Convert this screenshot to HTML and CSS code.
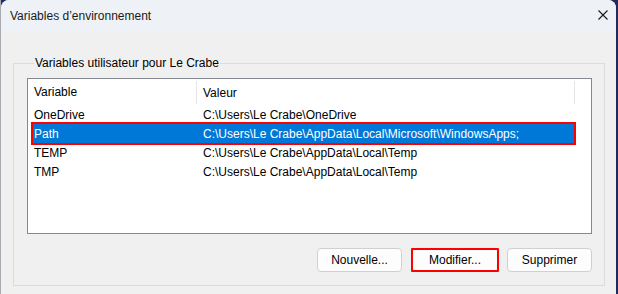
FILE: index.html
```html
<!DOCTYPE html>
<html lang="fr">
<head>
<meta charset="utf-8">
<title>Variables d'environnement</title>
<link rel="stylesheet" href="styles.css">
</head>
<body>
<div class="window">
  <div class="titlebar">
    <span class="title">Variables d’environnement</span>
    <svg class="close" width="10" height="10" viewBox="0 0 10 10"><path d="M0.5 0.5 L9.5 9.5 M9.5 0.5 L0.5 9.5" stroke="#1a1a1a" stroke-width="1.1" fill="none"/></svg>
  </div>
  <div class="content">
    <fieldset class="group">
      <legend class="group-label">Variables utilisateur pour Le Crabe</legend>
      <div class="listview">
        <div class="header">
          <div class="hcell col1">Variable</div>
          <div class="hcell col2">Valeur</div>
          <div class="hcell col3"></div>
        </div>
        <div class="rows">
          <div class="row"><span class="c1">OneDrive</span><span class="c2">C:\Users\Le Crabe\OneDrive</span></div>
          <div class="row selected"><span class="c1">Path</span><span class="c2">C:\Users\Le Crabe\AppData\Local\Microsoft\WindowsApps;</span></div>
          <div class="row"><span class="c1">TEMP</span><span class="c2">C:\Users\Le Crabe\AppData\Local\Temp</span></div>
          <div class="row"><span class="c1">TMP</span><span class="c2">C:\Users\Le Crabe\AppData\Local\Temp</span></div>
        </div>
      </div>
      <div class="buttons">
        <button class="btn btn-new">Nouvelle...</button>
        <button class="btn btn-edit">Modifier...</button>
        <button class="btn">Supprimer</button>
      </div>
    </fieldset>
  </div>
</div>
</body>
</html>
```

FILE: styles.css
```css
html, body {
  margin: 0;
  padding: 0;
}
body {
  width: 618px;
  height: 294px;
  overflow: hidden;
  background: linear-gradient(to right, #a9a9b0 0 1px, #1d2b5f 1px);
  font-family: "Segoe UI", "Liberation Sans", Arial, sans-serif;
  font-size: 12px;
  color: #000;
}
.window {
  margin-left: 1px;
  width: 615px;
  height: 294px;
  border-radius: 8px 8px 0 0;
  overflow: hidden;
  background: #f0f0f0;
  display: flex;
  flex-direction: column;
}
.titlebar {
  height: 31px;
  flex: none;
  background: #eef2f7;
  display: flex;
  align-items: center;
  justify-content: space-between;
  padding: 0 8px 0 9px;
}
.title {
  font-size: 12px;
  line-height: 14px;
  color: #1a1a1a;
  margin-top: 1px;
}
.close {
  display: block;
  margin-top: -1px;
}
.content {
  padding: 25px 11px 0 12px;
}
.group {
  margin: 0;
  border: 1px solid #dcdcdc;
  padding: 8px 12px 13px 13px;
  min-width: 0;
}
.group-label {
  padding: 0 1px;
  margin-left: 7px;
  line-height: 14px;
  color: #000;
}
.listview {
  height: 154px;
  border: 1px solid #848890;
  background: #fff;
}
.header {
  display: grid;
  grid-template-columns: 169px 372px 1fr;
  height: 26px;
  padding-left: 5px;
}
.hcell {
  display: flex;
  align-items: center;
  padding-left: 1px;
}
.col2, .col3 {
  border-left: 1px solid #e5e5e5;
  margin: 2px 0 1px 0;
  padding-left: 6px;
}
.col2 {
  margin-left: -6px;
}
.rows {
  display: flex;
  flex-direction: column;
}
.row {
  display: grid;
  grid-template-columns: 169px 1fr;
  height: 19px;
  align-items: center;
  margin: 0 17px 0 5px;
  padding-left: 1px;
}
.row.selected {
  background: #0078d7;
  color: #fff;
  outline: 2px solid #ff0000;
}
.buttons {
  display: flex;
  justify-content: flex-end;
  gap: 8px;
  margin-top: 14px;
}
.btn {
  font-family: inherit;
  font-size: 12px;
  height: 24px;
  width: 85px;
  padding: 0;
  background: #fdfdfd;
  border: 1px solid #d0d0d0;
  border-radius: 4px;
  color: #000;
}
.btn-new {
  margin-right: 1px;
}
.btn-edit {
  width: 88px;
  border: 2px solid #ff0000;
  border-radius: 1px;
}
```
